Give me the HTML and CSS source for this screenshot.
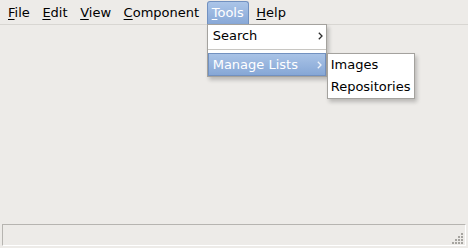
FILE: index.html
```html
<!DOCTYPE html>
<html lang="en">
<head>
  <meta charset="UTF-8">
  <title>Image Manager</title>
  <link rel="stylesheet" href="styles.css">
</head>
<body>
<div class="window">
  <!-- Menu bar -->
  <div class="menubar">
    <span class="menu-item"><u>F</u>ile</span>
    <span class="menu-item"><u>E</u>dit</span>
    <span class="menu-item"><u>V</u>iew</span>
    <span class="menu-item"><u>C</u>omponent</span>
    <span class="menu-item active"><u>T</u>ools
      <div class="dropdown">
        <div class="entry">Search
          <svg class="arrow" width="5" height="8" viewBox="0 0 5 8"><path d="M0.8 0.8 L4 4 L0.8 7.2" fill="none" stroke="currentColor" stroke-width="1.3"/></svg>
        </div>
        <div class="separator"></div>
        <div class="entry selected">Manage Lists
          <svg class="arrow" width="5" height="8" viewBox="0 0 5 8"><path d="M0.8 0.8 L4 4 L0.8 7.2" fill="none" stroke="currentColor" stroke-width="1.3"/></svg>
          <div class="submenu">
            <div class="sub-entry">Images</div>
            <div class="sub-entry">Repositories</div>
          </div>
        </div>
      </div>
    </span>
    <span class="menu-item"><u>H</u>elp</span>
  </div>

  <div class="content"></div>

  <!-- Status bar -->
  <div class="statusbar">
    <div class="status-field"></div>
    <svg class="grip" width="12" height="12" viewBox="0 0 12 12">
      <g fill="#a6a4a0">
        <rect x="9" y="0" width="2" height="2"/>
        <rect x="6" y="3" width="2" height="2"/>
        <rect x="9" y="3" width="2" height="2"/>
        <rect x="3" y="6" width="2" height="2"/>
        <rect x="6" y="6" width="2" height="2"/>
        <rect x="9" y="6" width="2" height="2"/>
        <rect x="0" y="9" width="2" height="2"/>
        <rect x="3" y="9" width="2" height="2"/>
        <rect x="6" y="9" width="2" height="2"/>
        <rect x="9" y="9" width="2" height="2"/>
      </g>
    </svg>
  </div>
</div>
</body>
</html>
```

FILE: styles.css
```css
body {
  margin: 0;
  font-family: "DejaVu Sans", sans-serif;
  font-size: 13px;
  color: #000;
  background-color: #edebe8;
}
.window {
  width: 468px;
  height: 248px;
  display: flex;
  flex-direction: column;
}
.menubar {
  display: flex;
  gap: 2.6px;
  height: 25px;
  padding-left: 3px;
  border-bottom: 1px solid #d8d6d2;
  box-sizing: border-box;
}
.menu-item {
  position: relative;
  padding: 0 4px;
  height: 23px;
  line-height: 22px;
  margin-top: 1px;
  border: 1px solid transparent;
  border-bottom: none;
  border-radius: 3px 3px 0 0;
  box-sizing: border-box;
}
.menu-item u {
  text-decoration-thickness: 1px;
  text-underline-offset: 2px;
}
.menu-item.active {
  background: linear-gradient(#abc5e8, #88a8d7);
  border-color: #7291c0;
  color: #fff;
}
.dropdown {
  position: absolute;
  top: 22px;
  left: -1px;
  width: 118px;
  background: #fff;
  border: 1px solid #a4a29e;
  box-shadow: 2px 3px 4px rgba(0, 0, 0, 0.22);
  color: #000;
  z-index: 2;
}
.entry {
  position: relative;
  height: 22px;
  line-height: 22px;
  padding: 0 3px 0 5px;
  display: flex;
  justify-content: space-between;
  align-items: center;
}
.arrow {
  color: #2e2e2e;
}
.separator {
  height: 1px;
  background: #c8c6c2;
  margin: 2px 0 3px;
}
.entry.selected {
  height: 23px;
  line-height: 21px;
  padding-left: 4px;
  background: linear-gradient(#a9c3e6, #86a7d6);
  color: #fff;
  border: 1px solid #7291c0;
  box-sizing: border-box;
}
.entry.selected .arrow {
  color: #eef3fa;
}
.submenu {
  position: absolute;
  top: -1px;
  left: 118px;
  width: 86px;
  background: #fff;
  border: 1px solid #a4a29e;
  box-shadow: 2px 3px 4px rgba(0, 0, 0, 0.22);
  color: #000;
}
.sub-entry {
  height: 22px;
  line-height: 22px;
  padding: 0 3px;
}
.content {
  flex: 1;
}
.statusbar {
  position: relative;
  height: 23px;
  padding: 0 2px 1px 2px;
}
.status-field {
  height: 22px;
  border-top: 1px solid #b6b4b0;
  border-left: 1px solid #b6b4b0;
  border-bottom: 1px solid #fff;
  border-right: 1px solid #fff;
  box-sizing: border-box;
}
.grip {
  position: absolute;
  right: 4px;
  bottom: 3px;
}
```
